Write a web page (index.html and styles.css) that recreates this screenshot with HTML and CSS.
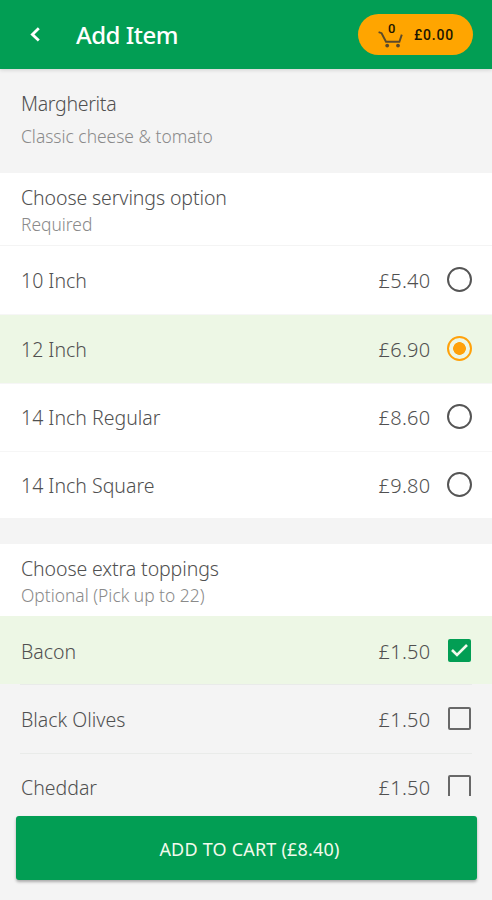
FILE: index.html
```html
<!DOCTYPE html>
<html lang="en">
<head>
    <meta charset="UTF-8">
    <meta name="viewport" content="width=device-width, initial-scale=1.0">
    <title>Add Item</title>
    <link rel="stylesheet" href="styles.css">
</head>
<body>
    <header class="header">
        <svg class="back" width="12" height="16" viewBox="0 0 12 16">
            <path d="M9.8 1.3 L3.4 7.4 L9.8 13.5" />
        </svg>
        <h1>Add Item</h1>
        <div class="basket">
            <div class="basket-icon">
                <svg width="26" height="26" viewBox="0 0 26 26">
                    <path d="M1.6 10.2 L4.6 11.2 L9 19.8 H22.4 L24.8 12.6" />
                    <circle cx="10.2" cy="23.6" r="1.9" />
                    <circle cx="21" cy="23.6" r="1.9" />
                </svg>
                <span class="basket-count">0</span>
            </div>
            <span class="basket-total">£0.00</span>
        </div>
    </header>

    <main class="content">
        <div class="item-info">
            <h2>Margherita</h2>
            <p>Classic cheese &amp; tomato</p>
        </div>

        <section class="servings">
            <div class="section-title">
                <h2>Choose servings option</h2>
                <p>Required</p>
            </div>
            <div class="option">
                <span class="name">10 Inch</span>
                <span class="price">£5.40</span>
                <span class="radio"></span>
            </div>
            <div class="option selected">
                <span class="name">12 Inch</span>
                <span class="price">£6.90</span>
                <span class="radio checked"></span>
            </div>
            <div class="option">
                <span class="name">14 Inch Regular</span>
                <span class="price">£8.60</span>
                <span class="radio"></span>
            </div>
            <div class="option">
                <span class="name">14 Inch Square</span>
                <span class="price">£9.80</span>
                <span class="radio"></span>
            </div>
        </section>

        <section class="toppings">
            <div class="section-title">
                <h2>Choose extra toppings</h2>
                <p>Optional (Pick up to 22)</p>
            </div>
            <div class="option selected">
                <span class="name">Bacon</span>
                <span class="price">£1.50</span>
                <span class="checkbox checked">
                    <svg width="23" height="23" viewBox="0 0 23 23">
                        <path d="M4 11 L9 16 L19 6" />
                    </svg>
                </span>
            </div>
            <div class="option">
                <span class="name">Black Olives</span>
                <span class="price">£1.50</span>
                <span class="checkbox"></span>
            </div>
            <div class="option">
                <span class="name">Cheddar</span>
                <span class="price">£1.50</span>
                <span class="checkbox"></span>
            </div>
        </section>
    </main>

    <footer class="footer">
        <button type="button">ADD TO CART (£8.40)</button>
    </footer>
</body>
</html>
```
FILE: styles.css
```css
* {
    box-sizing: border-box;
}
body {
    display: flex;
    flex-direction: column;
    height: 900px;
    margin: 0;
    overflow: hidden;
    background: #f4f4f4;
    color: #505050;
    font-family: "Noto Sans", sans-serif;
    font-weight: 300;
}
h1, h2, p {
    margin: 0;
}
.header {
    position: relative;
    display: flex;
    align-items: center;
    flex: none;
    height: 69px;
    padding: 0 19px 0 29px;
    background: #029e54;
    box-shadow: 0 1px 4px rgba(0, 0, 0, 0.15);
}
.header h1 {
    flex: 1;
    margin-left: 35px;
    color: #fff;
    font-size: 24px;
    font-weight: 500;
    letter-spacing: -0.5px;
}
.back path {
    fill: none;
    stroke: #fff;
    stroke-width: 2.8;
}
.basket {
    display: flex;
    align-items: center;
    width: 115px;
    height: 41px;
    padding-left: 19px;
    border-radius: 21px;
    background: #ffa500;
    color: #1c1600;
    font-family: Roboto, sans-serif;
    font-weight: 500;
}
.basket-icon {
    position: relative;
    width: 26px;
    height: 26px;
}
.basket-icon path {
    fill: none;
    stroke: #5b4a2b;
    stroke-width: 1.9;
}
.basket-icon circle {
    fill: #5b4a2b;
}
.basket-count {
    position: absolute;
    top: 0;
    left: 11px;
    font-size: 13px;
    line-height: 14px;
}
.basket-total {
    margin-left: 11px;
    font-size: 14px;
    letter-spacing: 0.8px;
}
.content {
    flex: none;
    height: 727px;
    overflow: hidden;
}
.item-info {
    height: 104px;
    padding: 22px 21px 0;
}
h2 {
    font-size: 19.5px;
    font-weight: 300;
    letter-spacing: -0.1px;
    line-height: 26px;
}
p {
    color: #8a8a8a;
    font-size: 17.4px;
    line-height: 26px;
}
.item-info h2 {
    letter-spacing: -0.3px;
}
.item-info p {
    margin-top: 6px;
}
.servings {
    height: 345px;
    margin-bottom: 26px;
    background: #fff;
}
.section-title {
    height: 73px;
    padding: 12px 21px 0;
    background: #fff;
}
.servings .section-title {
    border-bottom: 1px solid #f4f4f4;
}
.toppings .section-title {
    height: 72px;
}
.option {
    display: flex;
    align-items: center;
    height: 68.4px;
    padding: 0 20px 0 21px;
    font-size: 19.5px;
    line-height: 14px;
}
.servings .option + .option {
    border-top: 1px solid #f6f6f6;
}
.toppings .option {
    padding-top: 2px;
}
.toppings .option + .option {
    background: linear-gradient(#e9ebe9, #e9ebe9) 20px 0 / 452px 1px no-repeat;
}
.option.selected {
    background: #edf7e5;
}
.name {
    flex: 1;
    padding-top: 1px;
}
.price {
    margin-right: 16.5px;
    padding-top: 1px;
    font-size: 20px;
    letter-spacing: 0.3px;
}
.radio {
    width: 25px;
    height: 25px;
    margin-top: -2px;
    border: 2px solid #555;
    border-radius: 50%;
}
.radio.checked {
    border-color: #ffa10a;
    background: radial-gradient(circle, #ffa10a 6px, transparent 6.7px);
}
.checkbox {
    width: 23px;
    height: 23px;
    margin: -2px 1px 0 0;
    border: 2px solid #686868;
    border-radius: 2px;
}
.toppings .price {
    margin-right: 17.5px;
}
.checkbox.checked {
    border: 0;
    background: #029e54;
}
.checkbox svg {
    display: block;
}
.checkbox path {
    fill: none;
    stroke: #f2faec;
    stroke-width: 2.6;
}
.footer {
    padding: 20px 15px 0 16px;
}
.footer button {
    display: block;
    width: 100%;
    height: 64px;
    padding: 2px 0 0 6px;
    border: 0;
    border-radius: 3px;
    background: #029e54;
    box-shadow: 0 2px 3px rgba(0, 0, 0, 0.3);
    color: #f2faec;
    font-family: "Noto Sans", sans-serif;
    font-size: 18px;
    font-weight: 400;
    letter-spacing: 0.2px;
}
```
